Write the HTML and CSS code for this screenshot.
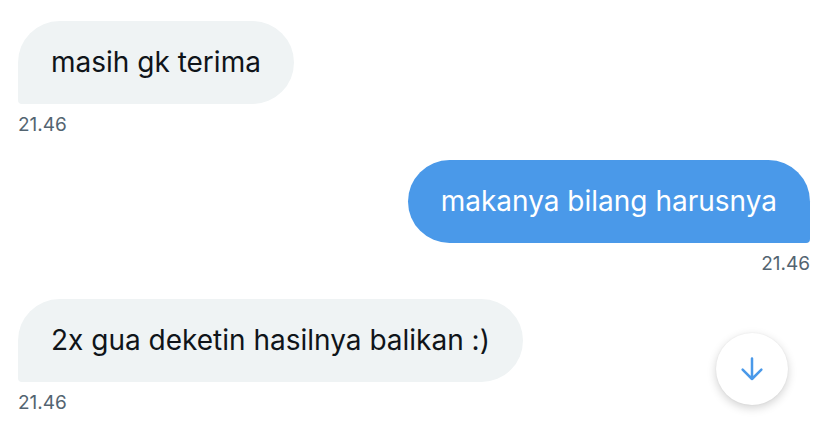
FILE: index.html
```html
<!DOCTYPE html>
<html>
<head>
<meta charset="utf-8">
<link rel="stylesheet" href="styles.css">
</head>
<body>
<div class="chat">
  <div class="msg in">
    <div class="bubble">masih gk terima</div>
    <div class="time">21.46</div>
  </div>
  <div class="msg out">
    <div class="bubble">makanya bilang harusnya</div>
    <div class="time">21.46</div>
  </div>
  <div class="msg in">
    <div class="bubble">2x gua deketin hasilnya balikan :)</div>
    <div class="time">21.46</div>
  </div>
  <button class="scroll-down" aria-label="Scroll down">
    <svg width="30" height="30" viewBox="0 0 24 24"><path d="M12 3.5v16.5M4.5 12.5L12 20l7.5-7.5" fill="none" stroke="#4a99e9" stroke-width="2" stroke-linecap="round" stroke-linejoin="round"/></svg>
  </button>
</div>
</body>
</html>
```
FILE: styles.css
```css
html, body {
  margin: 0;
  background: #ffffff;
}
body {
  font-family: Inter, "Noto Sans", sans-serif;
  color: #0f1419;
  width: 828px;
  height: 436px;
  overflow: hidden;
}
.chat {
  position: relative;
  padding: 21px 18px 0 18px;
  display: flex;
  flex-direction: column;
}
.msg {
  display: flex;
  flex-direction: column;
  margin-bottom: 24px;
}
.msg.in { align-items: flex-start; }
.msg.out { align-items: flex-end; }
.bubble {
  font-size: 28px;
  line-height: 83px;
  height: 83px;
  padding: 0 33px;
  border-radius: 42px;
  letter-spacing: 0;
}
.in .bubble {
  background: #eff3f4;
  border-bottom-left-radius: 4px;
}
.out .bubble {
  background: #4a99e9;
  color: #ffffff;
  border-bottom-right-radius: 4px;
}
.time {
  font-size: 19px;
  line-height: 22px;
  margin-top: 10px;
  color: #536471;
}
.scroll-down {
  position: absolute;
  left: 716px;
  top: 333px;
  width: 72px;
  height: 72px;
  border-radius: 50%;
  border: none;
  background: #ffffff;
  box-shadow: 0 3px 10px rgba(0,0,0,0.18), 0 0 2px rgba(0,0,0,0.06);
  display: flex;
  align-items: center;
  justify-content: center;
  padding: 0;
}
```
